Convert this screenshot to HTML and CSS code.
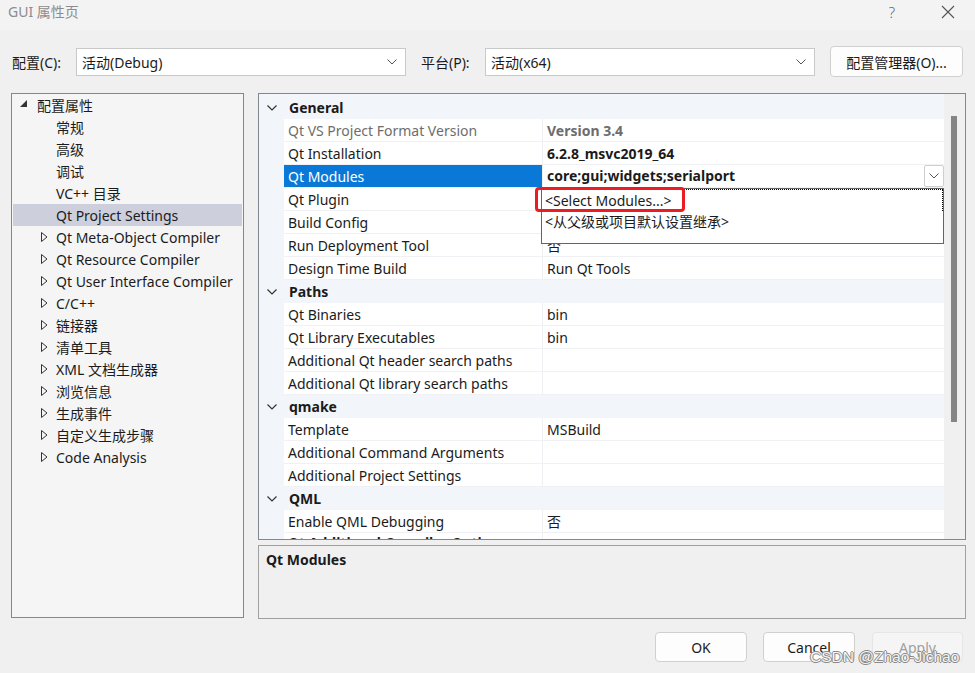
FILE: index.html
```html
<!DOCTYPE html>
<html lang="zh">
<head>
<meta charset="utf-8">
<title>GUI 属性页</title>
<link rel="stylesheet" href="styles.css">
</head>
<body>
<div class="window">
  <div class="titlebar">
    <span class="title">GUI 属性页</span>
    <div class="wctrls">
      <span class="help">?</span>
      <svg class="close" width="14" height="14" viewBox="0 0 14 14"><path d="M1 1 L13 13 M13 1 L1 13" stroke="#555" stroke-width="1.1" fill="none"/></svg>
    </div>
  </div>

  <div class="toolbar">
    <span class="lbl">配置(C):</span>
    <div class="combo c1"><span>活动(Debug)</span><svg width="10" height="6" viewBox="0 0 10 6"><path d="M0.5 0.5 L5 5 L9.5 0.5" stroke="#555" fill="none"/></svg></div>
    <span class="lbl lbl2">平台(P):</span>
    <div class="combo c2"><span>活动(x64)</span><svg width="10" height="6" viewBox="0 0 10 6"><path d="M0.5 0.5 L5 5 L9.5 0.5" stroke="#555" fill="none"/></svg></div>
    <div class="btn cfgbtn">配置管理器(O)...</div>
  </div>

  <div class="main">
    <div class="tree">
      <div class="ti root"><svg class="exp" width="8" height="8" viewBox="0 0 8 8"><path d="M7 0 L7 7 L0 7 Z" fill="#333"/></svg><span>配置属性</span></div>
      <div class="ti child">常规</div>
      <div class="ti child">高级</div>
      <div class="ti child">调试</div>
      <div class="ti child">VC++ 目录</div>
      <div class="ti child sel">Qt Project Settings</div>
      <div class="ti child arr"><svg class="tri" width="7" height="10" viewBox="0 0 7 10"><path d="M0.5 0.5 L6 5 L0.5 9.5 Z" stroke="#333" fill="none"/></svg>Qt Meta-Object Compiler</div>
      <div class="ti child arr"><svg class="tri" width="7" height="10" viewBox="0 0 7 10"><path d="M0.5 0.5 L6 5 L0.5 9.5 Z" stroke="#333" fill="none"/></svg>Qt Resource Compiler</div>
      <div class="ti child arr"><svg class="tri" width="7" height="10" viewBox="0 0 7 10"><path d="M0.5 0.5 L6 5 L0.5 9.5 Z" stroke="#333" fill="none"/></svg>Qt User Interface Compiler</div>
      <div class="ti child arr"><svg class="tri" width="7" height="10" viewBox="0 0 7 10"><path d="M0.5 0.5 L6 5 L0.5 9.5 Z" stroke="#333" fill="none"/></svg>C/C++</div>
      <div class="ti child arr"><svg class="tri" width="7" height="10" viewBox="0 0 7 10"><path d="M0.5 0.5 L6 5 L0.5 9.5 Z" stroke="#333" fill="none"/></svg>链接器</div>
      <div class="ti child arr"><svg class="tri" width="7" height="10" viewBox="0 0 7 10"><path d="M0.5 0.5 L6 5 L0.5 9.5 Z" stroke="#333" fill="none"/></svg>清单工具</div>
      <div class="ti child arr"><svg class="tri" width="7" height="10" viewBox="0 0 7 10"><path d="M0.5 0.5 L6 5 L0.5 9.5 Z" stroke="#333" fill="none"/></svg>XML 文档生成器</div>
      <div class="ti child arr"><svg class="tri" width="7" height="10" viewBox="0 0 7 10"><path d="M0.5 0.5 L6 5 L0.5 9.5 Z" stroke="#333" fill="none"/></svg>浏览信息</div>
      <div class="ti child arr"><svg class="tri" width="7" height="10" viewBox="0 0 7 10"><path d="M0.5 0.5 L6 5 L0.5 9.5 Z" stroke="#333" fill="none"/></svg>生成事件</div>
      <div class="ti child arr"><svg class="tri" width="7" height="10" viewBox="0 0 7 10"><path d="M0.5 0.5 L6 5 L0.5 9.5 Z" stroke="#333" fill="none"/></svg>自定义生成步骤</div>
      <div class="ti child arr"><svg class="tri" width="7" height="10" viewBox="0 0 7 10"><path d="M0.5 0.5 L6 5 L0.5 9.5 Z" stroke="#333" fill="none"/></svg>Code Analysis</div>
    </div>

    <div class="rightcol">
      <div class="grid">
        <div class="rows">
          <div class="hdr"><svg class="chev" width="10" height="6" viewBox="0 0 10 6"><path d="M0.5 0.5 L5 5 L9.5 0.5" stroke="#333" stroke-width="1.2" fill="none"/></svg><span>General</span></div>
          <div class="row"><div class="m"></div><div class="n dim">Qt VS Project Format Version</div><div class="v b dim">Version 3.4</div></div>
          <div class="row"><div class="m"></div><div class="n">Qt Installation</div><div class="v b">6.2.8_msvc2019_64</div></div>
          <div class="row"><div class="m"></div><div class="n selc">Qt Modules</div><div class="v b ddv"><span>core;gui;widgets;serialport</span><span class="ddbtn"><svg width="10" height="6" viewBox="0 0 10 6"><path d="M0.5 0.5 L5 5 L9.5 0.5" stroke="#555" fill="none"/></svg></span></div></div>
          <div class="row"><div class="m"></div><div class="n">Qt Plugin</div><div class="v"></div></div>
          <div class="row"><div class="m"></div><div class="n">Build Config</div><div class="v"></div></div>
          <div class="row"><div class="m"></div><div class="n">Run Deployment Tool</div><div class="v">否</div></div>
          <div class="row"><div class="m"></div><div class="n">Design Time Build</div><div class="v">Run Qt Tools</div></div>
          <div class="hdr"><svg class="chev" width="10" height="6" viewBox="0 0 10 6"><path d="M0.5 0.5 L5 5 L9.5 0.5" stroke="#333" stroke-width="1.2" fill="none"/></svg><span>Paths</span></div>
          <div class="row"><div class="m"></div><div class="n">Qt Binaries</div><div class="v">bin</div></div>
          <div class="row"><div class="m"></div><div class="n">Qt Library Executables</div><div class="v">bin</div></div>
          <div class="row"><div class="m"></div><div class="n">Additional Qt header search paths</div><div class="v"></div></div>
          <div class="row"><div class="m"></div><div class="n">Additional Qt library search paths</div><div class="v"></div></div>
          <div class="hdr"><svg class="chev" width="10" height="6" viewBox="0 0 10 6"><path d="M0.5 0.5 L5 5 L9.5 0.5" stroke="#333" stroke-width="1.2" fill="none"/></svg><span>qmake</span></div>
          <div class="row"><div class="m"></div><div class="n">Template</div><div class="v">MSBuild</div></div>
          <div class="row"><div class="m"></div><div class="n">Additional Command Arguments</div><div class="v"></div></div>
          <div class="row"><div class="m"></div><div class="n">Additional Project Settings</div><div class="v"></div></div>
          <div class="hdr"><svg class="chev" width="10" height="6" viewBox="0 0 10 6"><path d="M0.5 0.5 L5 5 L9.5 0.5" stroke="#333" stroke-width="1.2" fill="none"/></svg><span>QML</span></div>
          <div class="row"><div class="m"></div><div class="n">Enable QML Debugging</div><div class="v">否</div></div>
          <div class="row last"><div class="m"></div><div class="n b">Qt Additional Compiler Options</div><div class="v"></div></div>
        </div>
        <div class="scrollbar"><div class="thumb"></div></div>

        <div class="popup">
          <div class="opt focus">&lt;Select Modules...&gt;</div>
          <div class="opt">&lt;从父级或项目默认设置继承&gt;</div>
        </div>
        <div class="redbox"></div>
      </div>
      <div class="desc"><span class="b">Qt Modules</span></div>
    </div>
  </div>

  <div class="buttons">
    <div class="btn okb">OK</div>
    <div class="btn">Cancel</div>
    <div class="btn dis">Apply</div>
  </div>
  <div class="watermark">CSDN @Zhao-Jichao</div>
</div>
</body>
</html>
```

FILE: styles.css
```css
html, body {
  margin: 0;
  padding: 0;
}
body {
  background: #f0f0f0;
  font-family: "Noto Sans", "Noto Sans CJK SC", sans-serif;
  font-size: 14px;
  color: #1b1b1b;
}
.window {
  position: relative;
  width: 975px;
  height: 673px;
  overflow: hidden;
}
.titlebar {
  height: 30px;
  background: #f3f3f3;
  display: flex;
  align-items: flex-start;
  justify-content: space-between;
}
.title {
  margin-left: 8px;
  line-height: 24px;
  color: #8c8c8c;
  font-size: 14px;
}
.wctrls {
  display: flex;
  align-items: center;
  height: 24px;
  margin-right: 20px;
}
.help {
  color: #666;
  font-size: 15px;
  margin-right: 46px;
  font-family: "Noto Sans", sans-serif;
  font-weight: 300;
}
.close { display: block; }

.toolbar {
  display: flex;
  align-items: center;
  height: 31px;
  margin-top: 16px;
  padding-left: 12px;
}
.lbl { width: 64px; }
.lbl2 { width: 64px; margin-left: 15px; }
.combo {
  height: 28px;
  box-sizing: border-box;
  border: 1px solid #c9c9c9;
  background: #fff;
  display: flex;
  align-items: center;
  justify-content: space-between;
  padding: 0 8px 0 5px;
}
.c1 { width: 330px; }
.c2 { width: 330px; }
.btn {
  box-sizing: border-box;
  height: 30px;
  width: 92px;
  border: 1px solid #d0d0d0;
  border-radius: 4px;
  background: #fdfdfd;
  display: flex;
  align-items: center;
  justify-content: center;
}
.cfgbtn {
  width: 133px;
  height: 31px;
  margin-left: 15px;
}

.main {
  display: flex;
  gap: 14px;
  margin-top: 16px;
  padding-left: 11px;
}
.tree {
  box-sizing: border-box;
  width: 233px;
  height: 525px;
  border: 1px solid #828790;
  background: #f5f5f5;
  padding: 0 1px;
}
.ti {
  height: 22px;
  display: flex;
  align-items: center;
  white-space: nowrap;
  position: relative;
}
.root { padding-left: 7px; }
.root .exp { margin-right: 9px; margin-top: -2px; }
.child { padding-left: 43px; }
.child .tri { position: absolute; left: 28px; top: 6px; }
.sel { background: #cdcfdc; }

.rightcol {
  display: flex;
  flex-direction: column;
  gap: 5px;
}
.grid {
  position: relative;
  box-sizing: border-box;
  width: 708px;
  height: 447px;
  border: 1px solid #828790;
  background: #f2f5fa;
  display: flex;
}
.rows {
  width: 685px;
  padding-top: 2px;
  overflow: hidden;
}
.hdr {
  height: 23px;
  display: flex;
  align-items: center;
  font-weight: bold;
}
.hdr .chev { margin-left: 8px; margin-right: 12px; }
.row {
  height: 23px;
  display: grid;
  grid-template-columns: 25px 258px 1fr;
}
.m { background: #f2f5fa; }
.n, .v {
  background: #fff;
  box-sizing: border-box;
  border-bottom: 1px solid #eff1f5;
  padding-left: 4px;
  line-height: 24px;
  white-space: nowrap;
  overflow: hidden;
}
.row.last .n { line-height: 19px; }
.v { border-left: 1px solid #eef0f4; }
.b { font-weight: bold; }
.dim { color: #6d6d6d; }
.selc { background: #0a78d7; color: #fff; }
.ddv {
  display: flex;
  justify-content: space-between;
  align-items: center;
  padding-right: 0;
}
.ddbtn {
  box-sizing: border-box;
  width: 20px;
  height: 22px;
  border: 1px solid #cfcfcf;
  border-radius: 2px;
  background: #fff;
  display: flex;
  align-items: center;
  justify-content: center;
}
.scrollbar {
  width: 21px;
  background: #f0f0f0;
  position: relative;
}
.thumb {
  position: absolute;
  left: 7px;
  top: 22px;
  width: 6px;
  height: 306px;
  background: #858585;
}
.popup {
  position: absolute;
  left: 282px;
  top: 94px;
  width: 403px;
  height: 56px;
  box-sizing: border-box;
  border: 1px solid #646464;
  background: #fff;
  padding: 0;
}
.opt {
  height: 22px;
  line-height: 22px;
  padding-left: 3px;
  white-space: nowrap;
}
.opt.focus {
  border-top: 1px dotted #000;
  border-right: 1px dotted #000;
  height: 21px;
  line-height: 22px;
}
.redbox {
  position: absolute;
  left: 276px;
  top: 93px;
  width: 150px;
  height: 25px;
  box-sizing: border-box;
  border: 3px solid #ec1c24;
  border-radius: 4px;
}
.desc {
  box-sizing: border-box;
  width: 708px;
  height: 74px;
  border: 1px solid #a0a0a0;
  padding: 4px 7px;
}

.buttons {
  display: flex;
  justify-content: flex-end;
  gap: 16px;
  margin-top: 13px;
  padding-right: 12px;
}
.dis {
  width: 91px;
  margin-left: 1px;
  background: #f5f5f5;
  border-color: #e6e6e6;
  color: #a0a0a0;
}
.watermark {
  position: absolute;
  left: 810px;
  top: 648px;
  font-family: "Liberation Sans", sans-serif;
  font-size: 15.5px;
  color: #f4f4f4;
  text-shadow: 1px 0 0 #888, -1px 0 0 #888, 0 1px 0 #888, 0 -1px 0 #888;
  white-space: nowrap;
}
```
